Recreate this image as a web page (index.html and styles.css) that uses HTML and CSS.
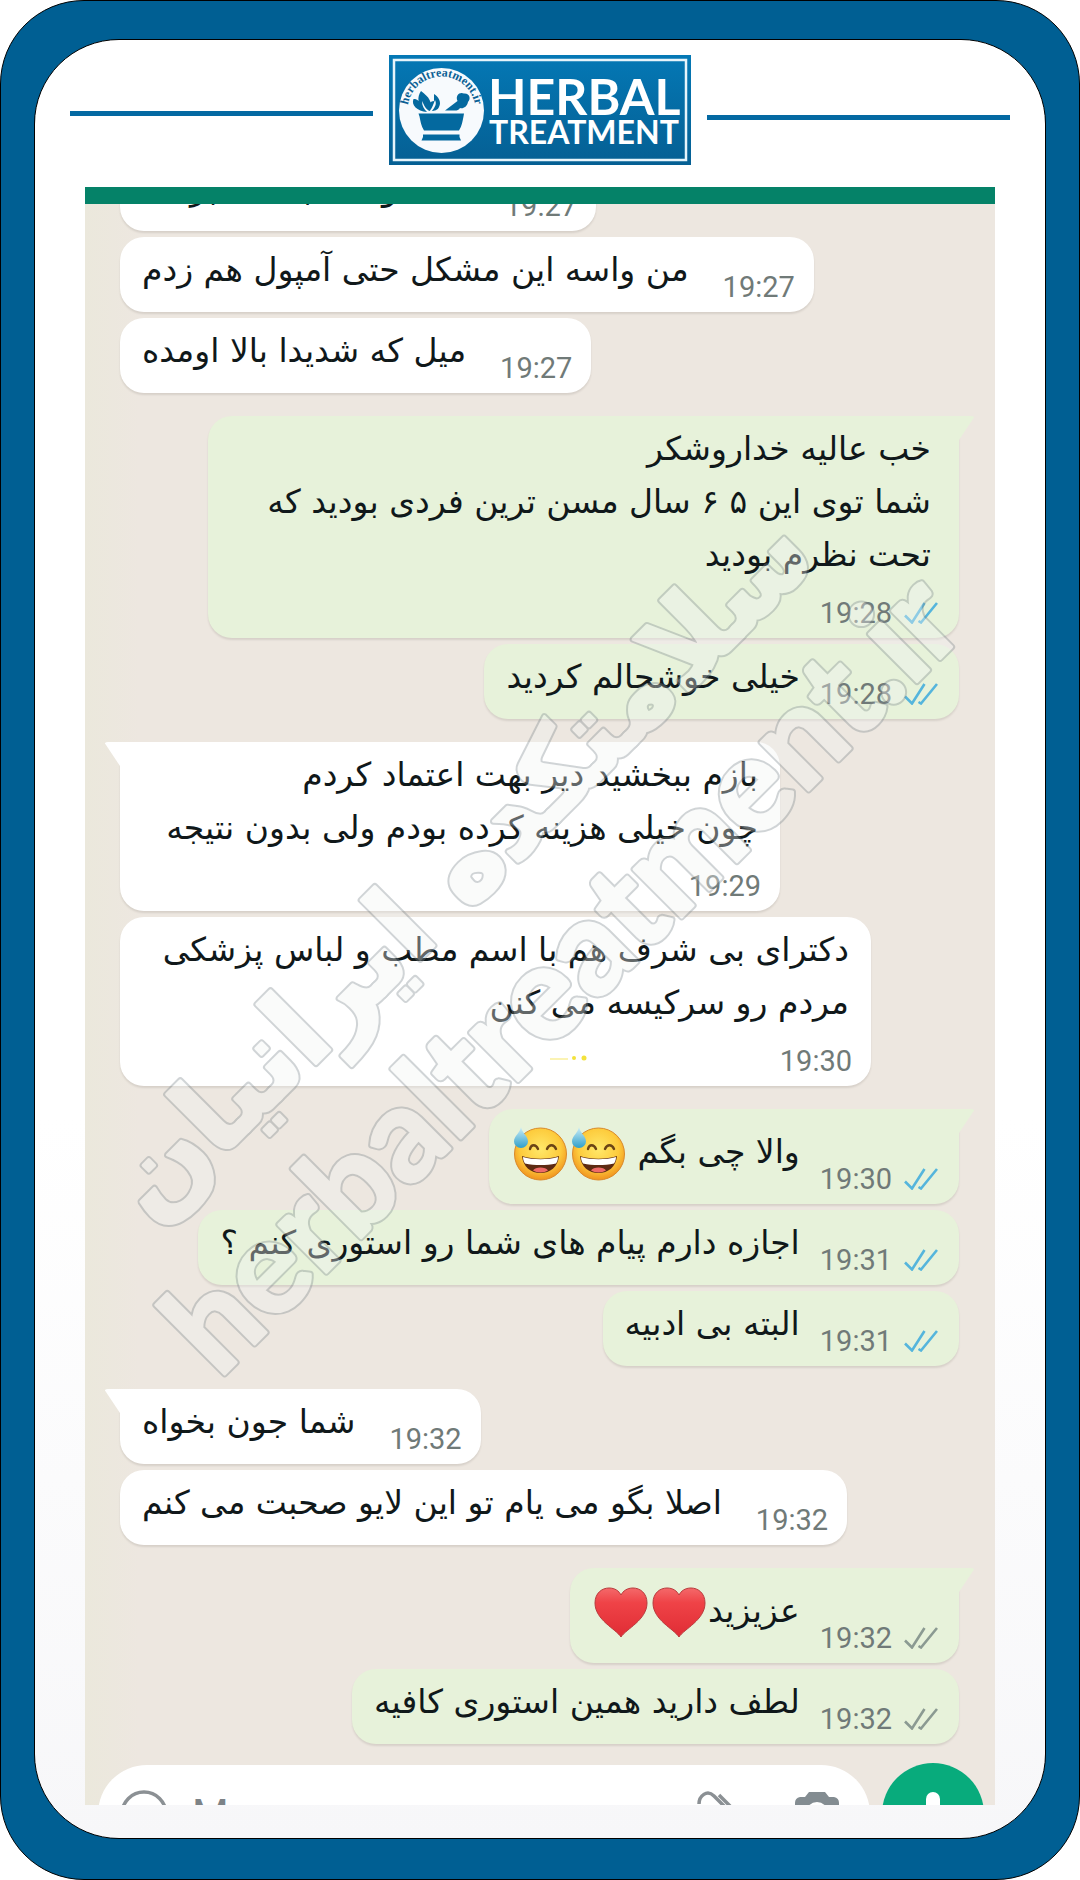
FILE: index.html
```html
<!DOCTYPE html>
<html lang="fa">
<head>
    <meta charset="UTF-8">
    <meta name="viewport" content="width=device-width, initial-scale=1.0">
    <title>Herbal Treatment</title>
    <link rel="stylesheet" href="styles.css">
</head>
<body>

<!-- shared icons -->
<svg class="sprite" aria-hidden="true">
    <defs>
        <radialGradient id="face" cx="50%" cy="40%" r="60%">
            <stop offset="0" stop-color="#ffe86a"/>
            <stop offset="0.65" stop-color="#fdcb3c"/>
            <stop offset="1" stop-color="#f0921e"/>
        </radialGradient>
        <linearGradient id="drop" x1="0" y1="0" x2="0" y2="1">
            <stop offset="0" stop-color="#cdeef8"/>
            <stop offset="1" stop-color="#2f9fca"/>
        </linearGradient>
        <linearGradient id="red" x1="0" y1="0" x2="0" y2="1">
            <stop offset="0" stop-color="#f4696a"/>
            <stop offset="0.3" stop-color="#ef4347"/>
            <stop offset="1" stop-color="#e02c35"/>
        </linearGradient>
    </defs>
    <symbol id="ticks" viewBox="0 0 34 22">
        <path d="M1 13.5 L8 20.5 L20.5 1 M14.5 19 L17 20.5 L33 1" fill="none" stroke="currentColor" stroke-width="2.6"/>
    </symbol>
    <symbol id="sweat" viewBox="0 0 54 54">
        <circle cx="27.5" cy="27" r="26" fill="url(#face)" stroke="#d98a2b" stroke-width="1"/>
        <path d="M17 22 C18 17 23 17 25 22 M34 22 C36 17 41 17 43 22" fill="none" stroke="#6b4415" stroke-width="2.4" stroke-linecap="round"/>
        <path d="M9 29 C20 32.500 35 32.500 46 29 C45 40 37 46 27.500 46 C18 46 10 40 9 29 Z" fill="#5d2a12"/>
        <path d="M10 30 C20 33 35 33 45 30 C45 33 44 35 43 36.500 C33 38.500 22 38.500 12 36.500 C11 35 10 33 10 30 Z" fill="#fff"/>
        <path d="M20 43.500 C22 39.500 33 39.500 35 43.500 C31 46 24 46 20 43.500 Z" fill="#ee6a68"/>
        <path d="M8 0 C9 6 15 9 15 14.500 A7 6.500 0 0 1 1 14.500 C1 9 7 6 8 0 Z" fill="url(#drop)"/>
    </symbol>
    <symbol id="heart" viewBox="0 0 54 54">
        <path d="M27 51 C22 43 1 34 1 17 C1 7 8 2 15 2 C21 2 25 5 27 9 C29 5 33 2 39 2 C46 2 53 7 53 17 C53 34 32 43 27 51 Z" fill="url(#red)" stroke="#b93a3c" stroke-width="1"/>
    </symbol>
</svg>

<div class="frame">
    <main class="card">
        <header class="brand">
            <span class="rule"></span>
            <svg class="logo" viewBox="0 0 302 110" role="img" aria-label="Herbal Treatment">
                <defs>
                    <linearGradient id="plate" x1="0" y1="0" x2="0" y2="1">
                        <stop offset="0" stop-color="#0478b5"/>
                        <stop offset="1" stop-color="#055f93"/>
                    </linearGradient>
                    <path id="arc" d="M18.500 55.500 A34 34 0 0 1 86.500 55.500"/>
                </defs>
                <rect width="302" height="110" fill="url(#plate)"/>
                <rect x="5" y="5" width="292" height="100" fill="none" stroke="#e6f4fb" stroke-width="2.5"/>
                <circle cx="52.500" cy="55.500" r="42.500" fill="#f7fafd"/>
                <text class="logo-ring"><textPath href="#arc" startOffset="50%" text-anchor="middle">herbaltreatment.ir</textPath></text>
                <g fill="#04699f">
                    <path d="M29.500 58.500 H75 L74.500 61.500 C73.500 66 73 71 70 75.500 H35 C32 71 31.500 66 30.500 61.500 Z"/>
                    <path d="M34 79.500 H70.500 V82 L72 85.500 H32.500 L34 82 Z"/>
                    <path d="M56 55.500 L68.500 46 C66 40 71 36.500 75 38.500 C81 38 82 44 79 47 C78 52 74 54 71 53 C70 55 68 55.500 66 55.500 Z"/>
                    <path d="M32 36 C40 42 44 47 41 56 C37 55 35 50 33 46 C33 51 35 54 38 57 C28 56 22 50 24.500 44 C27 44 28 44.500 29.500 46 C29 42 30 39 32 36 Z"/>
                    <path d="M45 39 C49 41 53 47 50 52 C49 55 45 56 43 56 C46 52 48 49 46 45 C44 50 43 53 41.500 55 C38 50 41 46 45 46 Z"/>
                </g>
                <text class="logo-top" x="99" y="60">HERBAL</text>
                <text class="logo-bottom" x="100" y="89">TREATMENT</text>
            </svg>
            <span class="rule rule-low"></span>
        </header>

        <section class="chat">
            <div class="topbar"></div>
            <div class="messages">
                <div class="bubble in">
                    <p class="text" dir="rtl">شده و حالا با کلی برکت</p>
                    <span class="meta">19:27</span>
                </div>
                <div class="bubble in">
                    <p class="text" dir="rtl">من واسه این مشکل حتی آمپول هم زدم</p>
                    <span class="meta">19:27</span>
                </div>
                <div class="bubble in">
                    <p class="text" dir="rtl">میل که شدیدا بالا اومده</p>
                    <span class="meta">19:27</span>
                </div>

                <div class="bubble out tail long">
                    <p class="text" dir="rtl">خب عالیه خداروشکر<br>شما توی این ۵ ۶ سال مسن ترین فردی بودید که تحت نظرم بودید</p>
                    <span class="meta">19:28 <svg class="ticks read"><use href="#ticks"/></svg></span>
                </div>
                <div class="bubble out">
                    <p class="text" dir="rtl">خیلی خوشحالم کردید</p>
                    <span class="meta">19:28 <svg class="ticks read"><use href="#ticks"/></svg></span>
                </div>

                <div class="bubble in tail long">
                    <p class="text" dir="rtl">بازم ببخشید دیر بهت اعتماد کردم<br>چون خیلی هزینه کرده بودم ولی بدون نتیجه</p>
                    <span class="meta">19:29</span>
                </div>
                <div class="bubble in long">
                    <p class="text" dir="rtl">دکترای بی شرف هم با اسم مطب و لباس پزشکی مردم رو سرکیسه می کنن</p>
                    <svg class="spark" viewBox="0 0 40 8" aria-hidden="true">
                        <path d="M2 5 H20" stroke="#fbf3b4" stroke-width="2"/>
                        <circle cx="26" cy="4" r="2" fill="#f3e23c"/>
                        <circle cx="36" cy="4" r="2.500" fill="#f3e23c"/>
                    </svg>
                    <span class="meta">19:30</span>
                </div>

                <div class="bubble out tail tall">
                    <p class="text" dir="rtl">والا چی بگم <svg class="emoji" role="img" aria-label="😅"><use href="#sweat"/></svg><svg class="emoji" role="img" aria-label="😅"><use href="#sweat"/></svg></p>
                    <span class="meta">19:30 <svg class="ticks read"><use href="#ticks"/></svg></span>
                </div>
                <div class="bubble out">
                    <p class="text" dir="rtl">اجازه دارم پیام های شما رو استوری کنم ؟</p>
                    <span class="meta">19:31 <svg class="ticks read"><use href="#ticks"/></svg></span>
                </div>
                <div class="bubble out">
                    <p class="text" dir="rtl">البته بی ادبیه</p>
                    <span class="meta">19:31 <svg class="ticks read"><use href="#ticks"/></svg></span>
                </div>

                <div class="bubble in tail">
                    <p class="text" dir="rtl">شما جون بخواه</p>
                    <span class="meta">19:32</span>
                </div>
                <div class="bubble in">
                    <p class="text" dir="rtl">اصلا بگو می یام تو این لایو صحبت می کنم</p>
                    <span class="meta">19:32</span>
                </div>

                <div class="bubble out tail tall">
                    <p class="text" dir="rtl">عزیزید<svg class="emoji" role="img" aria-label="❤️"><use href="#heart"/></svg><svg class="emoji" role="img" aria-label="❤️"><use href="#heart"/></svg></p>
                    <span class="meta">19:32 <svg class="ticks"><use href="#ticks"/></svg></span>
                </div>
                <div class="bubble out">
                    <p class="text" dir="rtl">لطف دارید همین استوری کافیه</p>
                    <span class="meta">19:32 <svg class="ticks"><use href="#ticks"/></svg></span>
                </div>
            </div>

            <form class="composer">
                <div class="field">
                    <button type="button" class="icon-btn" aria-label="Emoji">
                        <svg viewBox="0 0 48 48"><circle cx="24" cy="24" r="22" fill="none" stroke="#8b9094" stroke-width="3.500"/></svg>
                    </button>
                    <input type="text" class="message" placeholder="Message" aria-label="Message">
                    <button type="button" class="icon-btn" aria-label="Attach">
                        <svg viewBox="0 0 48 48"><path d="M2 14 C2 6 10 -1 17 6 L36 25 M22 5 L42 25" fill="none" stroke="#8b9094" stroke-width="3.500"/></svg>
                    </button>
                    <button type="button" class="icon-btn" aria-label="Camera">
                        <svg viewBox="0 0 48 48"><path d="M16 2 H32 L36 7 H41 Q46 8 46 13 V40 H2 V13 Q2 8 7 7 H12 Z" fill="#838c91"/><circle cx="24" cy="23" r="11" fill="#fff"/></svg>
                    </button>
                </div>
                <button type="button" class="mic" aria-label="Voice message">
                    <svg viewBox="0 0 48 48"><rect x="17" y="2" width="14" height="28" rx="7" fill="#fff"/><path d="M9 24 a15 15 0 0 0 30 0 M24 39 V47" fill="none" stroke="#fff" stroke-width="4"/></svg>
                </button>
            </form>

            <svg class="watermark" viewBox="0 0 910 1618" aria-hidden="true">
                <g transform="rotate(-45)">
                    <g class="mark-edge">
                        <text class="mark-fa" x="-216" y="783">سلامتکده ایرانیان</text>
                        <text class="mark-en" x="-218" y="938">herbaltreatment.ir</text>
                    </g>
                    <g class="mark-fill">
                        <text class="mark-fa" x="-216" y="783">سلامتکده ایرانیان</text>
                        <text class="mark-en" x="-218" y="938">herbaltreatment.ir</text>
                    </g>
                </g>
            </svg>
        </section>
    </main>
</div>

</body>
</html>
```

FILE: styles.css
```css
* {
    box-sizing: border-box;
}

body {
    margin: 0;
    background-color: #fff;
    font-family: "DejaVu Sans", sans-serif;
    color: #10181a;
}

.sprite {
    position: absolute;
    width: 0;
    height: 0;
}

/* blue frame */
.frame {
    height: 100vh;
    padding: 38px 33px 40px;
    border: 1px solid #000;
    border-radius: 84px;
    background-color: #005f93;
    display: flex;
}

.card {
    flex: 1;
    min-width: 0;
    display: flex;
    flex-direction: column;
    border: 1px solid #000;
    border-radius: 85px;
    background: linear-gradient(#fff 60%, #f7f7f9);
}

/* header */
.brand {
    display: flex;
    align-items: center;
    gap: 16px;
    padding: 15px 35px 22px;
}

.rule {
    flex: 1;
    height: 5px;
    margin-top: 7px;
    background-color: #0469a2;
}

.rule-low {
    margin-top: 15px;
}

.logo {
    width: 302px;
    height: 110px;
}

.logo text {
    font-family: Lato, sans-serif;
    font-weight: 700;
    fill: #fff;
}

.logo .logo-ring {
    font-family: "Liberation Serif", serif;
    font-size: 12px;
    fill: #0a5f94;
}

.logo-top {
    font-size: 50px;
}

.logo-bottom {
    font-size: 32px;
}

/* chat */
.chat {
    position: relative;
    flex: 1;
    min-height: 0;
    margin: 0 50px 33px;
    display: flex;
    flex-direction: column;
    overflow: hidden;
    background: linear-gradient(90deg, #ebe8dc, #ede7e0 6%, #ede7e0);
}

.topbar {
    flex: none;
    height: 17px;
    background-color: #058268;
    z-index: 1;
}

.messages {
    flex: 1;
    min-height: 0;
    display: flex;
    flex-direction: column;
    justify-content: flex-end;
    gap: 6px;
    padding: 0 36px 19px 35px;
}

.bubble {
    position: relative;
    flex: none;
    display: flex;
    align-items: flex-end;
    padding: 6px 19px 8px 22px;
    border-radius: 24px;
    box-shadow: 0 2px 2px rgba(60, 50, 40, 0.12);
}

.in {
    align-self: flex-start;
    gap: 34px;
    background-color: #fff;
}

.out {
    align-self: flex-end;
    gap: 20px;
    padding-right: 21px;
    background-color: #e7f2da;
}

.text {
    margin: 0 0 8px;
    font-size: 33px;
    line-height: 53px;
    white-space: nowrap;
}

.long {
    flex-direction: column;
    gap: 7px;
    min-width: 660px;
    max-width: 751px;
}

.long .text {
    align-self: stretch;
    padding-right: 3px;
    white-space: normal;
}

.out.long .text {
    padding-right: 7px;
}

.tall .text {
    line-height: 73px;
}

.meta {
    display: flex;
    align-items: center;
    gap: 12px;
    font-family: Roboto, sans-serif;
    font-size: 29px;
    line-height: 34px;
    color: #707a78;
}

.ticks {
    width: 34px;
    height: 22px;
    color: #8b9a92;
}

.read {
    color: #55b5dc;
}

.emoji {
    width: 54px;
    height: 54px;
    margin: 0 2px;
    vertical-align: middle;
}

.spark {
    position: absolute;
    left: 57%;
    bottom: 24px;
    width: 40px;
    height: 8px;
}

/* first bubble of a group */
.tail {
    margin-top: 17px;
}

.tail::before {
    content: "";
    position: absolute;
    top: 0;
    width: 40px;
    height: 24px;
    background-color: inherit;
}

.in.tail::before {
    left: -16px;
    border-top-left-radius: 4px;
    clip-path: polygon(0 0, 100% 0, 100% 100%, 40% 100%);
}

.out.tail::before {
    right: -16px;
    border-top-right-radius: 4px;
    clip-path: polygon(0 0, 100% 0, 60% 100%, 0 100%);
}

/* composer, runs past the bottom edge */
.composer {
    flex: none;
    display: flex;
    align-items: center;
    gap: 12px;
    margin-bottom: -60px;
    padding: 0 11px 0 13px;
}

.field {
    flex: 1;
    min-width: 0;
    display: flex;
    align-items: center;
    gap: 48px;
    height: 98px;
    padding: 0 29px 0 22px;
    border-radius: 49px;
    background-color: #fff;
}

.message {
    flex: 1;
    min-width: 0;
    height: 60px;
    margin-left: -24px;
    padding: 0;
    border: none;
    outline: none;
    background: none;
    font-family: Roboto, sans-serif;
    font-size: 42px;
}

.message::placeholder {
    color: #7d8387;
    opacity: 1;
}

.icon-btn {
    flex: none;
    width: 48px;
    height: 48px;
    padding: 0;
    border: none;
    background: none;
}

.icon-btn svg {
    display: block;
}

.mic {
    flex: none;
    width: 102px;
    height: 102px;
    padding: 27px;
    border: none;
    border-radius: 50%;
    background-color: #08ab7c;
}

.mic svg {
    display: block;
}

/* watermark */
.watermark {
    position: absolute;
    top: 0;
    left: 0;
    width: 100%;
    opacity: 0.36;
    pointer-events: none;
    z-index: 2;
}

.watermark text {
    font-weight: 700;
    text-anchor: middle;
    stroke-linejoin: round;
}

.mark-edge {
    fill: #7f8a90;
    stroke: #7f8a90;
    stroke-width: 7px;
}

.mark-fill {
    fill: #f2f4f3;
    stroke: #f2f4f3;
    stroke-width: 3px;
}

.mark-fa {
    font-family: "DejaVu Sans", sans-serif;
    font-size: 110px;
}

.mark-en {
    font-family: Lato, sans-serif;
    font-size: 131px;
}
```
